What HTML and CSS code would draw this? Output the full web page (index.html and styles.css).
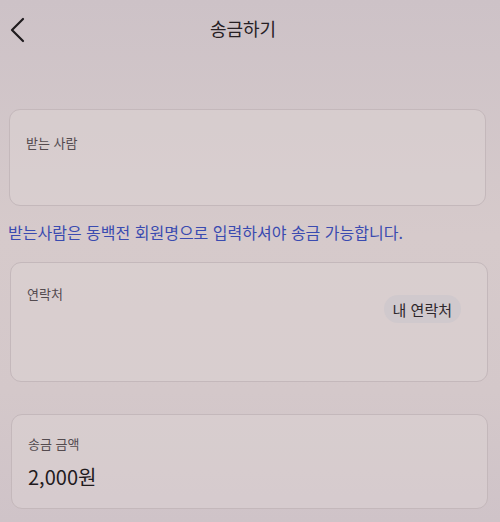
FILE: index.html
```html
<!DOCTYPE html>
<html lang="ko">
<head>
    <meta charset="utf-8"/>
    <title>송금하기</title>
<link rel="stylesheet" href="styles.css">
</head>
<body>
    <header class="topbar">
        <button class="back" aria-label="뒤로">
            <svg width="16" height="26" viewBox="0 0 16 26"><path d="M13 2 L2 13 L13 24" fill="none" stroke="#1f1b1e" stroke-width="2.2" stroke-linecap="round" stroke-linejoin="round"/></svg>
        </button>
        <h1 class="title">송금하기</h1>
    </header>

    <main class="form">
        <div class="field field-name">
            <span class="label">받는 사람</span>
        </div>
        <p class="notice">받는사람은 동백전 회원명으로 입력하셔야 송금 가능합니다.</p>

        <div class="field field-phone">
            <span class="label">연락처</span>
            <button class="chip">내 연락처</button>
        </div>

        <div class="field field-amount">
            <span class="label">송금 금액</span>
            <span class="amount">2,000원</span>
        </div>
    </main>
</body>
</html>
```

FILE: styles.css
```css
html, body {
    margin: 0;
    height: 100%;
}
body {
    font-family: "Noto Sans CJK KR", "Noto Sans", sans-serif;
    color: #2a2327;
    background: linear-gradient(180deg, #cdc2c7 0%, #d6cacb 45%, #d4c8ca 75%, #cfc3c8 100%);
}

.topbar {
    position: relative;
    height: 55px;
    display: flex;
    align-items: center;
    justify-content: center;
    padding-right: 14px;
}
.back {
    position: absolute;
    left: 10px;
    top: 17px;
    background: none;
    border: 0;
    padding: 0;
    display: flex;
}
.title {
    margin: 0;
    font-size: 18px;
    font-weight: 400;
    color: #272024;
}

.form {
    padding: 54px 14px 0 9px;
    display: flex;
    flex-direction: column;
}

.field {
    box-sizing: border-box;
    border: 1px solid #c4b8bb;
    border-radius: 11px;
    background: rgba(222, 212, 212, 0.45);
    padding: 24px 16px 0 16px;
    position: relative;
}
.field-name { height: 97px; }
.field-phone { height: 120px; margin-left: 1px; margin-right: -2px; padding-top: 22px; }
.field-amount { height: 95px; margin-top: 32px; margin-left: 2px; margin-right: -2px; padding-top: 20px; }

.label {
    display: block;
    font-size: 13px;
    line-height: 18px;
    color: #544b4f;
}

.notice {
    margin: 15px 0 19px -1px;
    font-size: 16px;
    line-height: 22px;
    color: #3a4bb0;
}

.chip {
    position: absolute;
    right: 26px;
    top: 32px;
    height: 28px;
    padding: 0 9px;
    border: 0;
    border-radius: 14px;
    background: #d0c9cd;
    font-family: inherit;
    font-size: 15px;
    color: #2e272b;
}

.amount {
    display: block;
    margin-top: 12px;
    font-size: 20px;
    line-height: 24px;
    color: #1f1a1d;
}
```
